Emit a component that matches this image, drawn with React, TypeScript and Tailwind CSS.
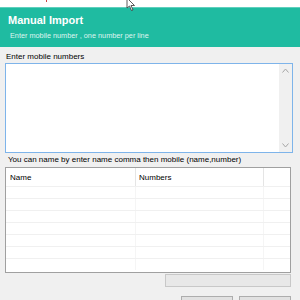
export default function App() {
  const rows = [0, 1, 2, 3, 4, 5, 6];
  return (
    <div
      className="relative w-[300px] h-[300px] overflow-hidden bg-[#f0f0f0]"
      style={{ fontFamily: '"Liberation Sans", Arial, sans-serif' }}
    >
      <div className="h-[7px] bg-white" />
      <div className="h-[40px] bg-[#1fbba1] border-t border-[#5fd0bd] pl-[8px] pt-[6px]">
        <div className="text-white font-bold text-[11px] leading-[13px]">Manual Import</div>
        <div className="text-[#dff5f0] text-[7.3px] leading-[10px] mt-[4px] ml-[2px]">
          Enter mobile number , one number per line
        </div>
      </div>

      <div className="px-[5px] pt-[5px]">
        <div className="text-[8px] leading-[10px] text-black ml-[1px]">Enter mobile numbers</div>
        <div className="mt-[1px] h-[90px] w-[288px] border border-[#7eb4ea] bg-white flex justify-end">
          <div className="w-[13px] bg-[#f0f0f0] flex flex-col items-center justify-between py-[4px]">
            <svg width="7" height="5" viewBox="0 0 7 5">
              <path d="M0.5 4.5 L3.5 1 L6.5 4.5" fill="none" stroke="#a6a6a6" strokeWidth="1" />
            </svg>
            <svg width="7" height="5" viewBox="0 0 7 5">
              <path d="M0.5 0.5 L3.5 4 L6.5 0.5" fill="none" stroke="#a6a6a6" strokeWidth="1" />
            </svg>
          </div>
        </div>
        <div className="text-[8px] leading-[10px] text-black mt-[2px] ml-[3px]">
          You can name by enter name comma then mobile (name,number)
        </div>

        <div className="mt-[2px] w-[286px] h-[106px] border border-[#a0a0a0] bg-white flex flex-col">
          <div className="flex h-[18px] text-[8px] text-black">
            <div className="w-[130px] border-r border-[#e5e5e5] pl-[4px] pt-[4px]">Name</div>
            <div className="w-[128px] border-r border-[#e5e5e5] pl-[3px] pt-[4px]">Numbers</div>
            <div className="flex-1" />
          </div>
          {rows.map((r) => (
            <div key={r} className="flex h-[12px] border-t border-[#f0f0f0]">
              <div className="w-[130px] border-r border-[#f5f5f5]" />
              <div className="w-[128px] border-r border-[#f5f5f5]" />
              <div className="flex-1" />
            </div>
          ))}
        </div>

        <div className="flex justify-end mt-[1px] w-[286px]">
          <div className="w-[126px] h-[13px] border border-[#c8c8c8] bg-[#e8e8e8]" />
        </div>

        <div className="flex items-center mt-[9px] w-[286px]">
          <div className="w-[9px] h-[9px] border border-[#333] bg-white" />
          <div className="text-[8px] ml-[4px] text-black">Remove duplicates</div>
          <div className="flex-1" />
          <div className="w-[52px] h-[16px] border border-[#adadad] bg-[#e1e1e1] text-[8px] flex items-center justify-center">Cancel</div>
          <div className="w-[52px] h-[16px] ml-[6px] border border-[#adadad] bg-[#e1e1e1] text-[8px] flex items-center justify-center">Import</div>
        </div>
      </div>

      <div className="absolute left-[46px] top-0 w-[1px] h-[2px] bg-[#d04040]" />
      <svg className="absolute left-[126px] top-[-2px]" width="12" height="14" viewBox="0 0 12 14">
        <path d="M1 0 L1 10 L3.5 8 L5.5 12.5 L7 12 L5 7.5 L8.5 7.5 Z" fill="white" stroke="#333" strokeWidth="0.8" />
      </svg>
    </div>
  );
}
